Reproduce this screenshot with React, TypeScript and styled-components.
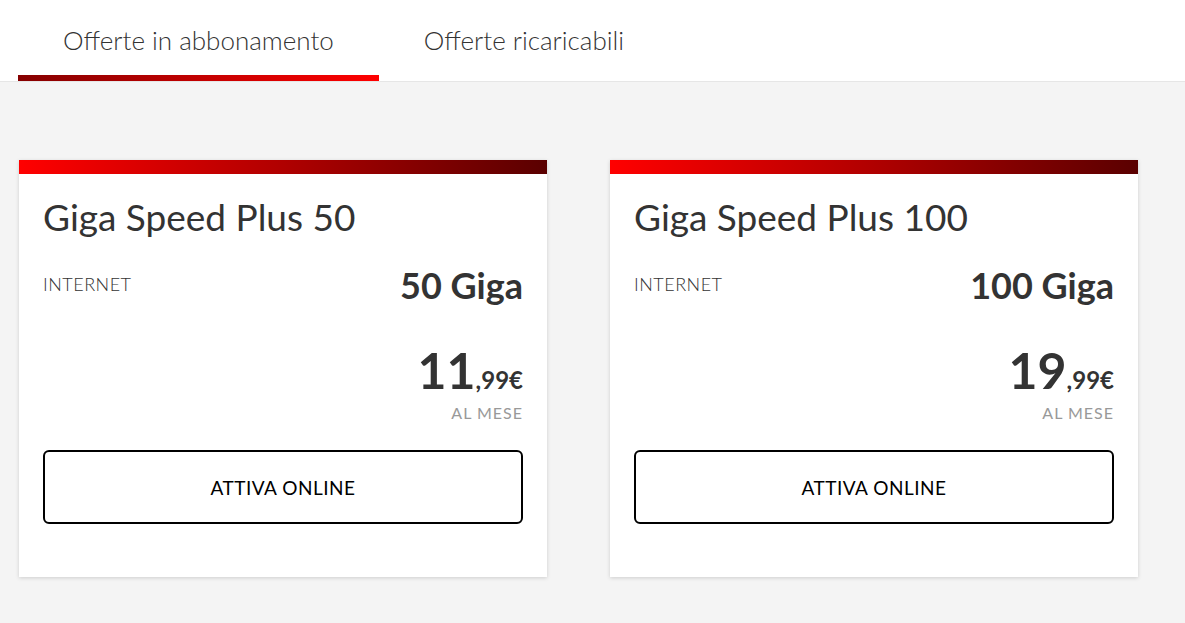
import styled, { createGlobalStyle } from "styled-components";

const GlobalStyle = createGlobalStyle`
  body {
    margin: 0;
    background: #f4f4f4;
    font-family: Lato, "Liberation Sans", sans-serif;
    color: #333;
  }
`;

const Page = styled.div`
  min-height: 623px;
  background: #f4f4f4;
`;

const TabBar = styled.div`
  display: flex;
  height: 81px;
  padding-left: 18px;
  background: #fff;
  border-bottom: 1px solid #e6e6e6;
`;

const Tab = styled.div<{ $active?: boolean }>`
  position: relative;
  display: flex;
  align-items: center;
  padding: 0 45px 2px 45px;
  font-size: 26px;
  font-weight: 300;
  color: #333;

  ${({ $active }) =>
    $active &&
    `
    &::after {
      content: "";
      position: absolute;
      left: 0;
      right: 0;
      bottom: 0;
      height: 6px;
      background: linear-gradient(90deg, #850000 0%, #ff0000 100%);
    }
  `}
`;

const Cards = styled.div`
  display: grid;
  grid-template-columns: 528px 528px;
  gap: 63px;
  padding: 78px 0 0 19px;
`;

const Card = styled.div`
  display: flex;
  flex-direction: column;
  height: 417px;
  background: #fff;
  box-shadow: 0 1px 4px rgba(0, 0, 0, 0.16);
`;

const TopBar = styled.div`
  height: 14px;
  background: linear-gradient(90deg, #ff0000 0%, #b00000 50%, #5a0000 100%);
`;

const Body = styled.div`
  display: flex;
  flex-direction: column;
  padding: 21px 24px 0 24px;
`;

const Title = styled.h2`
  margin: 0;
  font-size: 37px;
  font-weight: 400;
  line-height: 44px;
  color: #333;
`;

const Row = styled.div`
  display: flex;
  justify-content: space-between;
  align-items: flex-start;
  margin-top: 26px;
`;

const Label = styled.span`
  padding-top: 10px;
  font-size: 18px;
  line-height: 18px;
  font-weight: 300;
  letter-spacing: 0.5px;
  text-transform: uppercase;
`;

const Amount = styled.span`
  font-size: 36px;
  line-height: 40px;
  font-weight: 700;
`;

const Price = styled.div`
  display: flex;
  flex-direction: column;
  align-items: flex-end;
  margin-top: 40px;
`;

const PriceMain = styled.div`
  font-size: 50px;
  font-weight: 700;
  line-height: 50px;
`;

const Cents = styled.span`
  font-size: 24px;
  line-height: 24px;
  font-weight: 700;
`;

const Period = styled.span`
  margin-top: 10px;
  font-size: 16px;
  line-height: 16px;
  font-weight: 400;
  letter-spacing: 1px;
  color: #999;
`;

const Button = styled.button`
  margin-top: 29px;
  height: 74px;
  border: 2px solid #000;
  border-radius: 6px;
  background: #fff;
  font-family: Lato, "Liberation Sans", sans-serif;
  font-size: 19px;
  font-weight: 400;
  letter-spacing: 0.5px;
  color: #000;
  cursor: pointer;
`;

const offers = [
  { name: "Giga Speed Plus 50", giga: "50 Giga", euro: "11", cents: ",99€" },
  { name: "Giga Speed Plus 100", giga: "100 Giga", euro: "19", cents: ",99€" },
];

const App = () => {
  return (
    <Page>
      <GlobalStyle />
      <TabBar>
        <Tab $active>Offerte in abbonamento</Tab>
        <Tab>Offerte ricaricabili</Tab>
      </TabBar>
      <Cards>
        {offers.map(o => (
          <Card key={o.name}>
            <TopBar />
            <Body>
              <Title>{o.name}</Title>
              <Row>
                <Label>Internet</Label>
                <Amount>{o.giga}</Amount>
              </Row>
              <Price>
                <PriceMain>
                  {o.euro}
                  <Cents>{o.cents}</Cents>
                </PriceMain>
                <Period>AL MESE</Period>
              </Price>
              <Button>ATTIVA ONLINE</Button>
            </Body>
          </Card>
        ))}
      </Cards>
    </Page>
  );
};

export default App;
